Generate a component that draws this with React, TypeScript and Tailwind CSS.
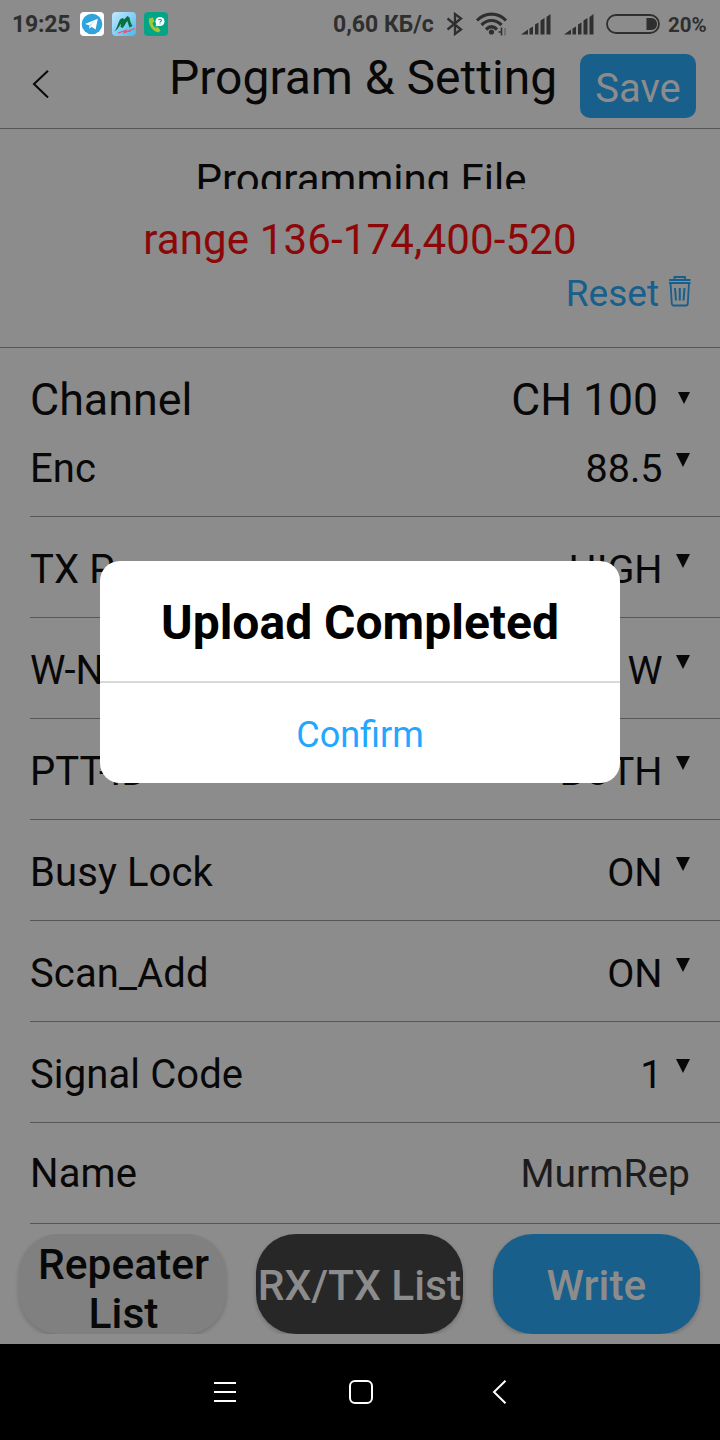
import React from "react";

const rows: { label: string; value: string }[] = [
  { label: "Enc", value: "88.5" },
  { label: "TX Power", value: "HIGH" },
  { label: "W-N", value: "W" },
  { label: "PTT-ID", value: "BOTH" },
  { label: "Busy Lock", value: "ON" },
  { label: "Scan_Add", value: "ON" },
  { label: "Signal Code", value: "1" },
];

function Signal() {
  return (
    <svg className="h-[21px] w-[30px]" viewBox="0 0 30 21" fill="#2f2f2f">
      <path d="M0 20.5L7 15.5V20.5Z" />
      <path d="M8.5 14.5L12 12.5V20.5H8.5Z" />
      <path d="M14 10.5L17.5 8.5V20.5H14Z" />
      <path d="M19.5 6.5L23.5 4V20.5H19.5Z" />
      <path d="M25.5 3L29.5 0V20.5H25.5Z" />
    </svg>
  );
}

function StatusBar() {
  return (
    <div className="flex h-12 items-center pl-3 pr-[12px] font-bold text-[#2f2f2f]">
      <span className="w-[68px] whitespace-nowrap pt-[2px] text-[23px] leading-6 tracking-[-0.2px]">19:25</span>
      <svg className="h-6 w-6" viewBox="0 0 24 24">
        <rect width="24" height="24" rx="4" fill="#fff" />
        <circle cx="12" cy="12" r="10.3" fill="#2fa4dc" />
        <path d="M5 12L17.8 6.7L15.6 17.5L11.5 14.7L9.5 16.8L9 13.2Z" fill="#fff" />
        <path d="M9 13.2L15 8.8L10.5 13.8L9.5 16.8Z" fill="#b4d9ed" />
      </svg>
      <svg className="ml-2 h-6 w-6" viewBox="0 0 24 24">
        <defs>
          <linearGradient id="sky" x1="0" y1="0" x2="1" y2="1">
            <stop offset="0" stopColor="#c4e9ff" />
            <stop offset="1" stopColor="#47b8ee" />
          </linearGradient>
        </defs>
        <rect width="24" height="24" rx="4" fill="url(#sky)" />
        <path d="M2 19.500C5 17.500 6 10 8.500 7L11 6L12 7.500L15.500 4L17.500 5.500C18 9 19 12 20.500 14L17.500 15.500C16.500 13 16 11 15.300 9C13.500 11.500 12.500 14 10.500 16L8.500 15L9 11.500C7 15 5 18.500 2 19.500Z" fill="#08713d" />
        <path d="M6 21L14 18.500L12.500 20.500L23 16.500" fill="none" stroke="#ef536c" strokeWidth="1.300" />
        <path d="M13 20L19 19" fill="none" stroke="#ef536c" strokeWidth="1" />
      </svg>
      <svg className="ml-2 h-6 w-6" viewBox="0 0 24 24">
        <rect width="24" height="24" rx="4" fill="#04a486" />
        <path d="M5 6.500C4 12 8 19.500 14.500 20.500L16.500 18.500L13.800 15L11.500 16C9.500 14.500 8.800 12.500 8.500 11L10.300 9.500L9 5.500Z" fill="#a1c83c" />
        <circle cx="16" cy="9.500" r="4.500" fill="#fff" />
        <path d="M12.500 11.500L11.500 14.500L15.500 13.500Z" fill="#fff" />
        <path d="M14.500 8.300C14.600 6.800 17.500 6.900 17.400 8.500C17.300 9.500 16 9.500 16 10.600M16 11.400V12.200" fill="none" stroke="#04a486" strokeWidth="1.100" />
      </svg>
      <span className="ml-auto w-[113px] whitespace-nowrap pt-[2px] text-[23px] leading-6">0,60 КБ/с</span>
      <svg className="h-6 w-[18px]" viewBox="0 0 18 24" fill="none" stroke="#2f2f2f" strokeWidth="2.300">
        <path d="M1.500 6.500L15 17.500L9 22V2L15 6.500L1.500 17.500" />
      </svg>
      <svg className="ml-[12px] h-[24px] w-[32px]" viewBox="0 0 32 24" fill="none" stroke="#2f2f2f" strokeWidth="3.200">
        <path d="M1 8.500C9 0 22 0 30 8.500" />
        <path d="M5.500 13C11.500 7 19.500 7 25.500 13" />
        <path d="M10 17.500C13.500 14 17.500 14 21 17.500" />
        <circle cx="15.500" cy="20" r="2.600" fill="#2f2f2f" stroke="none" />
        <path d="M25.500 15.500V23.500M22.500 20H25" strokeWidth="1.600" />
        <path d="M29 16V23.500" stroke="#6a6a6a" strokeWidth="1.600" />
      </svg>
      <div className="ml-[13px] flex gap-[13px]">
        <Signal />
        <Signal />
      </div>
      <svg className="ml-[12px] h-[20px] w-[54px]" viewBox="0 0 54 20">
        <rect x="1" y="1" width="52" height="18" rx="9" fill="none" stroke="#2f2f2f" strokeWidth="1.800" />
        <path d="M40.500 4H45C53 4 53 16 45 16H40.500Z" fill="#2f2f2f" />
      </svg>
      <span className="ml-2 w-[40px] whitespace-nowrap pt-[2px] text-[20.500px] leading-6">20%</span>
    </div>
  );
}

export default function App() {
  return (
    <div className="relative flex h-[1440px] w-[720px] flex-col overflow-hidden bg-[#8c8c8c] font-[Roboto,sans-serif] text-[#080808]">
      <StatusBar />
      <header className="flex h-[81px] items-start border-b border-[#575757]">
        <svg className="ml-[32px] mt-[22px] h-[28px] w-[18px]" viewBox="0 0 18 28" fill="none" stroke="#080808" strokeWidth="2">
          <path d="M16 .8L2 14L16 27.500" />
        </svg>
        <h1 className="ml-[119px] w-[411px] whitespace-nowrap text-[48px] leading-[60px]">Program &amp; Setting</h1>
        <button className="mt-[6px] h-16 w-[116px] rounded-[10px] bg-[#185f8c] pt-[6px] text-[40px] leading-[58px] text-[#8c8c8c]">
          Save
        </button>
      </header>

      <section className="flex h-[219px] flex-col border-b border-[#575757]">
        <div className="mt-[30px] h-[30px] overflow-hidden pl-[2px] text-center text-[42px] leading-[42px]">Programming File</div>
        <div className="mt-[29px] text-center text-[42px] leading-[44px] tracking-[0.15px] text-[#8c0808]">range 136-174,400-520</div>
        <div className="mt-[11px] flex items-center justify-end pr-[28px] text-[#185f8c]">
          <span className="text-[37px] leading-[42px]">Reset</span>
          <svg className="mb-[6px] ml-[9px] h-[31px] w-[24px]" viewBox="0 0 24 31" fill="none" stroke="#185f8c" strokeWidth="1.800">
            <path d="M1 4H22.500M1 7H22.500" strokeWidth="1.800" />
            <path d="M6.500 4V1H17V4" />
            <path d="M2.500 7L3.800 27.500Q4 29.500 5.500 29.500H18Q19.700 29.500 19.800 27.500L21 7" />
            <path d="M7 12L8 24.500M11.800 12V24.500M16.500 12L15.500 24.500" strokeWidth="2" />
          </svg>
        </div>
      </section>

      <main className="flex flex-col">
        <div className="flex h-[68px] items-center pl-[30px] pr-[30px] pt-[36px] text-[44.800px] leading-[32px]">
          <span>Channel</span>
          <span className="ml-auto text-[44.500px]">CH 100</span>
          <svg className="mb-1 ml-[20px] h-[12px] w-[12px]" viewBox="0 0 12 12">
            <path d="M0 0H12L6 12Z" fill="#080808" />
          </svg>
        </div>
        {rows.map((row) => (
          <div
            key={row.label}
            className="ml-[30px] flex h-[101px] items-center border-b border-[#575757] pr-[30px] pt-[6px] text-[40px] leading-[40px]"
          >
            <span className="tracking-[0.1px]">{row.label}</span>
            <span className="ml-auto text-[39.500px]">{row.value}</span>
            <svg className="mb-[19px] ml-[13.500px] h-[14px] w-[14px]" viewBox="0 0 14 14">
              <path d="M0 0H14L7 14Z" fill="#080808" />
            </svg>
          </div>
        ))}
        <div className="ml-[30px] flex h-[101px] items-center border-b border-[#575757] pr-[30px] pt-[2px] text-[40px] leading-[40px]">
          <span className="tracking-[0.1px]">Name</span>
          <span className="ml-auto text-[39px] text-[#1c1c1c]">MurmRep</span>
        </div>
      </main>

      <div className="mt-[10px] h-[100px] overflow-hidden">
        <div className="flex gap-[30px] pl-[19px] text-[42.500px] font-medium leading-[49px]">
          <button className="flex h-[100px] w-[207px] flex-col items-center whitespace-nowrap rounded-[40px] bg-[#808080] pl-[2px] pt-[7px] leading-[48.500px] shadow-[0_2px_4px_#0003]">
            <span>Repeater</span>
            <span>List</span>
          </button>
          <button className="h-[100px] w-[207px] whitespace-nowrap rounded-[40px] bg-[#272727] pt-[2px] text-[#8c8c8c] shadow-[0_2px_4px_#0003]">
            RX/TX List
          </button>
          <button className="h-[100px] w-[207px] rounded-[40px] bg-[#185f8c] pt-[2px] text-[#8c8c8c] shadow-[0_2px_4px_#0003]">
            Write
          </button>
        </div>
      </div>

      <nav className="mt-[10px] flex h-24 items-center bg-black pl-[214px]">
        <svg className="h-[22px] w-[22px]" viewBox="0 0 22 22" stroke="#fff" strokeWidth="2">
          <path d="M0 2H22M0 11H22M0 20H22" />
        </svg>
        <svg className="ml-[113px] h-[24px] w-[24px]" viewBox="0 0 24 24" fill="none" stroke="#fff" strokeWidth="2">
          <rect x="1" y="1" width="22" height="22" rx="5" />
        </svg>
        <svg className="ml-[119px] h-[24px] w-[16px]" viewBox="0 0 16 24" fill="none" stroke="#fff" strokeWidth="2">
          <path d="M13.500 .8L2 12L13.500 23.200" />
        </svg>
      </nav>

      <div className="absolute left-[100px] top-[561px] h-[222px] w-[520px] overflow-hidden rounded-[20px] bg-white text-center">
        <div className="h-[122px] border-b-2 border-[#d9d9d9] pt-[3px] text-[48px] font-bold leading-[117px] text-black">
          Upload Completed
        </div>
        <div className="h-[100px] pt-[3px] text-[36px] leading-[98px] text-[#22a7ff]">Confirm</div>
      </div>
    </div>
  );
}
